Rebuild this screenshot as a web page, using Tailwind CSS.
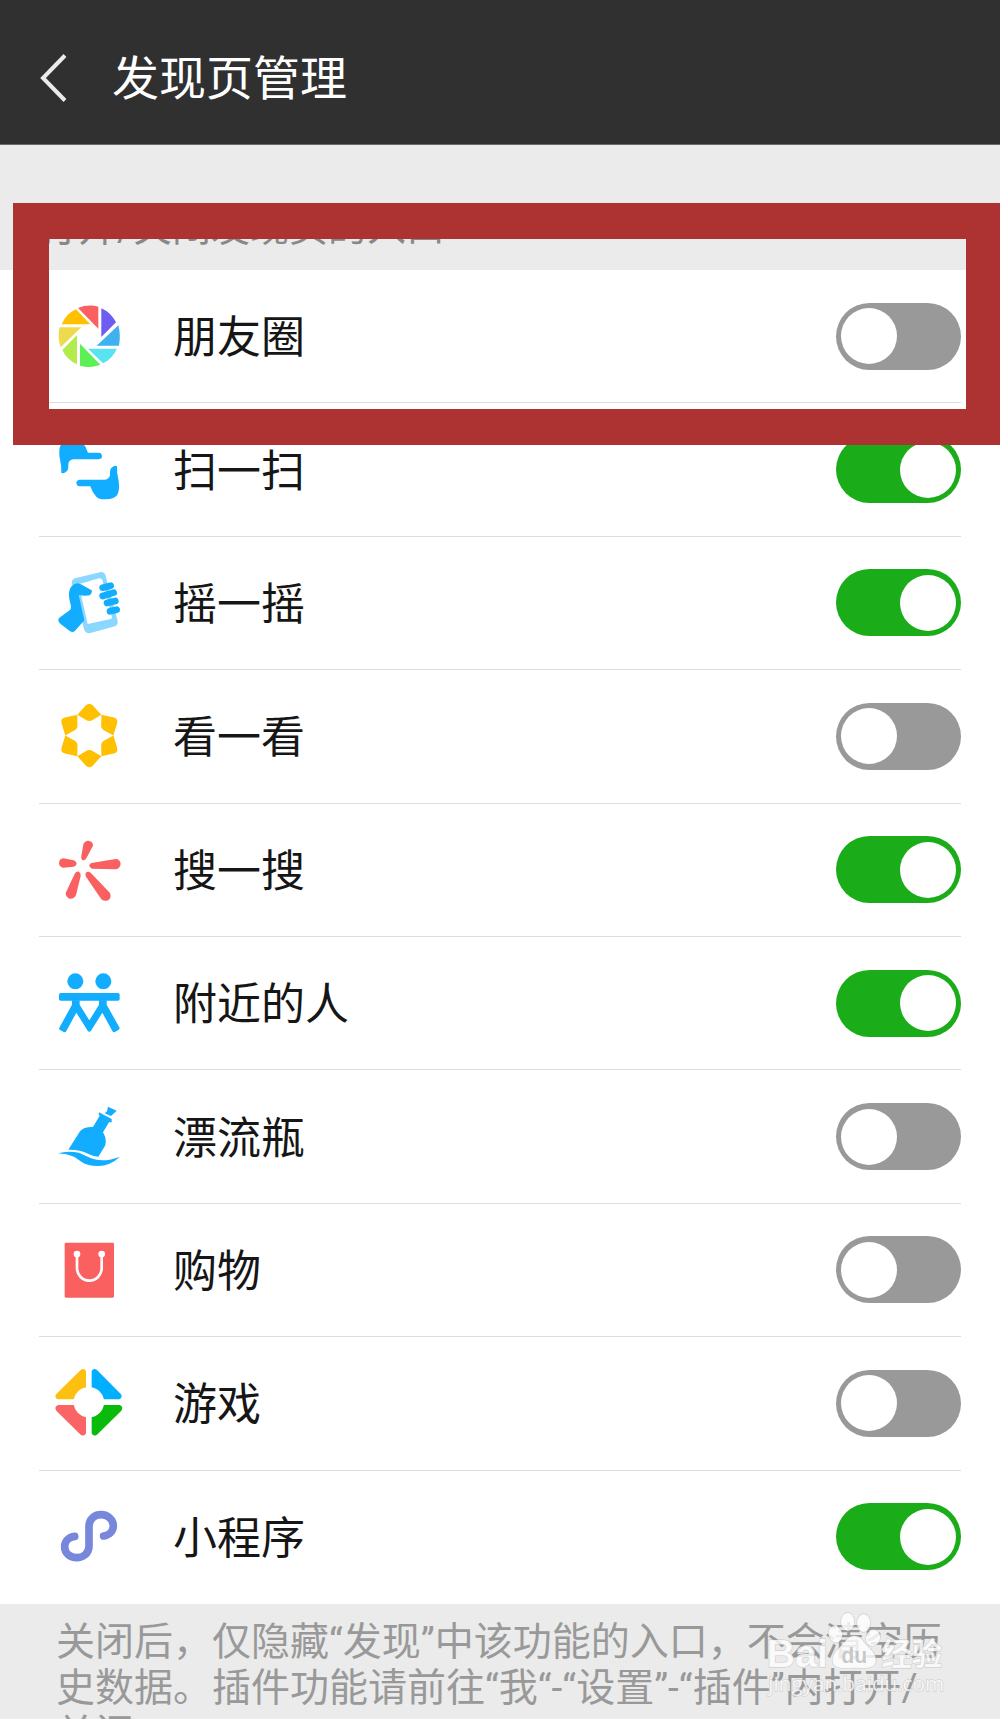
<!DOCTYPE html>
<html lang="zh-CN">
<head>
<meta charset="utf-8">
<meta name="viewport" content="width=device-width, initial-scale=1">
<title>发现页管理</title>
<script src="https://cdn.jsdelivr.net/npm/@tailwindcss/browser@4"></script>
</head>
<body class="bg-[#ebebeb]">
<div class="relative flex h-screen flex-col overflow-hidden bg-[#ebebeb] font-['Roboto','Noto_Sans_CJK_SC',sans-serif] text-[#161616]">
  <header class="flex h-[145px] shrink-0 items-center border-b border-[#6b6b6b] bg-[#303030] px-10 pt-3 text-white">
    <button type="button" aria-label="返回" class="mr-11 block">
      <svg class="h-12 w-7" viewBox="0 0 28 48" fill="none" stroke="#ebebeb" stroke-width="4"><path d="M25 1.500 3 24 25 46.500"/></svg>
    </button>
    <h1 class="text-[47px] leading-none">发现页管理</h1>
  </header>

  <main>
    <h2 class="px-[39px] pt-[60px] pb-[19px] text-[39px] leading-[46px] text-[#888]">打开/关闭发现页的入口</h2>

    <ul class="grid h-[1334px] auto-rows-fr bg-white px-[39px] text-[44px]">
      <li class="flex items-center border-b border-[#dedede]">
        <svg class="ml-[18px] size-16 overflow-visible" viewBox="171 101 192 192">
          <path fill="#fa6060" d="M234 113Q264 101 295 109V175Z"/>
          <path fill="#6e5df0" d="M304 114Q332 126 348 156L304 200Z"/>
          <path fill="#3eb1ee" d="M355 165Q363 195 357 226H290Z"/>
          <path fill="#57e3f0" d="M264 235H350Q339 264 309 279Z"/>
          <path fill="#5bf054" d="M240 220 301 283Q270 295 240 286Z"/>
          <path fill="#b2ec4c" d="M231 194V282Q200 268 187 239Z"/>
          <path fill="#eddb4d" d="M179 171H244L182 231Q171 200 179 171Z"/>
          <path fill="#fec000" d="M185 162Q198 130 228 117L271 162Z"/>
        </svg>
        <label for="moments" class="ml-[52px] flex-1 pt-1">朋友圈</label>
        <input id="moments" type="checkbox" class="flex h-[67px] w-[125px] appearance-none items-center rounded-full bg-[#999] px-[5px] before:size-14 before:rounded-full before:bg-white checked:justify-end checked:bg-[#1bad19]">
      </li>
      <li class="flex items-center border-b border-[#dedede]">
        <svg class="ml-[18px] size-16 overflow-visible" viewBox="171 501 192 192" fill="#12adff">
          <path id="hand" d="M184 605Q190 610 201 600Q206 595 205 578Q208 566 220 565H297Q306 563 306 555Q305 546 297 545H264Q258 526 246 514Q238 506 222 506Q194 505 184 518Q175 533 179 560Q185 585 184 605Z"/>
          <use href="#hand" transform="rotate(180 267.500 595.500)"/>
        </svg>
        <label for="scan" class="ml-[52px] flex-1 pt-1">扫一扫</label>
        <input id="scan" type="checkbox" checked class="flex h-[67px] w-[125px] appearance-none items-center rounded-full bg-[#999] px-[5px] before:size-14 before:rounded-full before:bg-white checked:justify-end checked:bg-[#1bad19]">
      </li>
      <li class="flex items-center border-b border-[#dedede]">
        <svg class="ml-[18px] size-16 overflow-visible" viewBox="81 92 192 192" fill="#12adff">
          <path fill="#8ad7ff" fill-rule="evenodd" d="M135 114 213 95Q223 94 226 103L263 242Q264 253 255 258L179 279Q168 279 163 269L125 128Q125 118 135 114ZM146 132 173 251 242 236Q248 235 245 228L217 119Q214 113 207 114Z"/>
          <path d="M85 240Q84 235 90 231L119 210Q125 204 122 193Q113 162 120 145Q127 131 143 129Q154 131 166 139L185 150Q188 157 179 165Q166 168 146 164L163 240 134 273Q127 278 119 272L91 250Q85 245 85 240Z"/>
          <g fill="none" stroke="#12adff" stroke-width="20" stroke-linecap="round"><path d="M218 142 242 136M218 167 251 157M231 188 256 182M240 213 260 208"/></g>
        </svg>
        <label for="shake" class="ml-[52px] flex-1 pt-1">摇一摇</label>
        <input id="shake" type="checkbox" checked class="flex h-[67px] w-[125px] appearance-none items-center rounded-full bg-[#999] px-[5px] before:size-14 before:rounded-full before:bg-white checked:justify-end checked:bg-[#1bad19]">
      </li>
      <li class="flex items-center border-b border-[#dedede]">
        <svg class="ml-[18px] size-16 overflow-visible" viewBox="81 492 192 192" fill="#fec000">
          <path id="petal" d="M142 524 168 496Q178 486 188 496L214 524 189 539Q178 547 167 539Z"/>
          <use href="#petal" transform="rotate(60 178 586.500)"/>
          <use href="#petal" transform="rotate(120 178 586.500)"/>
          <use href="#petal" transform="rotate(180 178 586.500)"/>
          <use href="#petal" transform="rotate(240 178 586.500)"/>
          <use href="#petal" transform="rotate(300 178 586.500)"/>
        </svg>
        <label for="look" class="ml-[52px] flex-1 pt-1">看一看</label>
        <input id="look" type="checkbox" class="flex h-[67px] w-[125px] appearance-none items-center rounded-full bg-[#999] px-[5px] before:size-14 before:rounded-full before:bg-white checked:justify-end checked:bg-[#1bad19]">
      </li>
      <li class="flex items-center border-b border-[#dedede]">
        <svg class="ml-[18px] size-16 overflow-visible" viewBox="81 82 192 192" fill="#fa6060">
          <path d="M160 101Q165 89 176 90Q190 93 189 105L169 143Q163 152 156 147Q152 144 154 136Z"/>
          <path d="M100 143 131 149Q139 152 140 159Q138 166 131 168L100 171Q88 170 87 157Q88 144 100 143Z"/>
          <path d="M184 157 257 145Q270 145 272 160Q270 174 257 176L186 174Q178 171 178 164Q179 159 184 157Z"/>
          <path d="M135 188Q140 181 147 183Q153 187 152 196L138 253Q133 265 119 264Q107 260 107 247Z"/>
          <path d="M167 187Q173 180 182 186L240 247Q245 259 236 268Q224 274 214 266L168 198Q165 192 167 187Z"/>
        </svg>
        <label for="search" class="ml-[52px] flex-1 pt-1">搜一搜</label>
        <input id="search" type="checkbox" checked class="flex h-[67px] w-[125px] appearance-none items-center rounded-full bg-[#999] px-[5px] before:size-14 before:rounded-full before:bg-white checked:justify-end checked:bg-[#1bad19]">
      </li>
      <li class="flex items-center border-b border-[#dedede]">
        <svg class="ml-[18px] size-16 overflow-visible" viewBox="81 482 192 192" fill="#12adff">
          <circle cx="136" cy="513" r="24"/><circle cx="220" cy="513" r="24"/>
          <rect x="87" y="548" width="182" height="23" rx="5"/>
          <path d="M126 570H149V583L178 630 207 583V570H230V583L268 651Q270 656 266 658L255 665Q250 667 247 662L217 607 184 660Q178 669 172 660L139 607 109 662Q106 667 101 665L90 659Q86 656 88 652L126 583Z"/>
        </svg>
        <label for="nearby" class="ml-[52px] flex-1 pt-1">附近的人</label>
        <input id="nearby" type="checkbox" checked class="flex h-[67px] w-[125px] appearance-none items-center rounded-full bg-[#999] px-[5px] before:size-14 before:rounded-full before:bg-white checked:justify-end checked:bg-[#1bad19]">
      </li>
      <li class="flex items-center border-b border-[#dedede]">
        <svg class="ml-[18px] size-16 overflow-visible" viewBox="81 72 192 192" fill="#12adff">
          <path d="M234 77 260 89 243 105 224 97 231 91Z"/>
          <path d="M207 94 245 114V124H237L219 154Q231 175 226 193L205 227Q191 227 174 218Q149 205 115 206L150 151Q161 137 189 138L209 104Q204 99 207 94Z"/>
          <path d="M84 217Q112 208 147 215L183 232Q221 246 270 227Q241 254 204 255Q173 255 154 242L132 227Q110 218 84 217Z"/>
        </svg>
        <label for="bottle" class="ml-[52px] flex-1 pt-1">漂流瓶</label>
        <input id="bottle" type="checkbox" class="flex h-[67px] w-[125px] appearance-none items-center rounded-full bg-[#999] px-[5px] before:size-14 before:rounded-full before:bg-white checked:justify-end checked:bg-[#1bad19]">
      </li>
      <li class="flex items-center border-b border-[#dedede]">
        <svg class="ml-[18px] size-16 overflow-visible" viewBox="81 472 192 192">
          <rect x="104" y="486" width="148" height="165" rx="4" fill="#fa6060"/>
          <circle cx="141" cy="520" r="10" fill="#fff"/><circle cx="215" cy="520" r="10" fill="#fff"/>
          <path d="M141 520V562A37 38 0 0 0 215 562V520" fill="none" stroke="#fff" stroke-width="8"/>
        </svg>
        <label for="shopping" class="ml-[52px] flex-1 pt-1">购物</label>
        <input id="shopping" type="checkbox" class="flex h-[67px] w-[125px] appearance-none items-center rounded-full bg-[#999] px-[5px] before:size-14 before:rounded-full before:bg-white checked:justify-end checked:bg-[#1bad19]">
      </li>
      <li class="flex items-center border-b border-[#dedede]">
        <svg class="ml-[18px] size-16 overflow-visible" viewBox="81 93 192 192">
          <path fill="#fdc010" d="M168 94V142Q139 148 131 178H85Q71 174 79 162L152 90Q163 83 168 94Z"/>
          <path fill="#00b0ff" d="M185 94V142Q214 148 222 178H267Q279 174 273 163L201 90Q190 83 185 94Z"/>
          <path fill="#fa6464" d="M168 280V232Q139 225 131 195H85Q71 200 79 212L152 284Q163 291 168 280Z"/>
          <path fill="#0bbb0c" d="M185 280V232Q214 225 222 195H269Q282 200 274 212L201 284Q190 291 185 280Z"/>
        </svg>
        <label for="games" class="ml-[52px] flex-1 pt-1">游戏</label>
        <input id="games" type="checkbox" class="flex h-[67px] w-[125px] appearance-none items-center rounded-full bg-[#999] px-[5px] before:size-14 before:rounded-full before:bg-white checked:justify-end checked:bg-[#1bad19]">
      </li>
      <li class="flex items-center border-b border-white">
        <svg class="ml-[18px] size-16 overflow-visible" viewBox="81 493 192 192" fill="none" stroke="#7788dc" stroke-width="23" stroke-linecap="round">
          <path d="M134 587C115 589 104 603 104 618C104 637 120 651 140 651C161 651 177 637 177 617V557C177 537 192 522 213 522C234 522 250 537 250 556C250 570 239 583 221 586"/>
        </svg>
        <label for="mini" class="ml-[52px] flex-1 pt-1">小程序</label>
        <input id="mini" type="checkbox" checked class="flex h-[67px] w-[125px] appearance-none items-center rounded-full bg-[#999] px-[5px] before:size-14 before:rounded-full before:bg-white checked:justify-end checked:bg-[#1bad19]">
      </li>
    </ul>

    <p class="px-14 pt-[15px] text-[39px] leading-[46px] whitespace-nowrap text-[#999]">关闭后，仅隐藏“发现”中该功能的入口，不会清空历<br>史数据。插件功能请前往“我“-“设置”-“插件”内打开/<br>关闭。</p>
  </main>

  <!-- highlight around the first entry -->
  <div class="pointer-events-none absolute top-[203px] right-0 left-[13px] h-[242px] border-36 border-r-34 border-[#ad3333]"></div>

  <!-- watermark -->
  <svg class="pointer-events-none absolute top-[1610px] right-[52px] h-[90px] w-[183px]" viewBox="795 90 549 270" fill="#fff" fill-opacity=".8" stroke="#aaa" stroke-opacity=".4" stroke-width="4" paint-order="stroke">
    <ellipse cx="1043" cy="125" rx="20" ry="27"/>
    <ellipse cx="1091" cy="129" rx="20" ry="27"/>
    <ellipse cx="1006" cy="163" rx="20" ry="25" transform="rotate(-15 1006 163)"/>
    <ellipse cx="1119" cy="174" rx="21" ry="25" transform="rotate(20 1119 174)"/>
    <path d="M1063 167Q1080 167 1092 187L1119 216Q1133 236 1124 254Q1113 268 1063 263Q1014 269 1001 254Q992 238 1006 216L1034 187Q1046 167 1063 167Z"/>
    <text x="800" y="262" font-family="Liberation Sans" font-weight="700" font-size="118">Bai</text>
    <text x="1024" y="250" font-family="Liberation Sans" font-weight="700" font-size="64" fill="#bbb" stroke="none">du</text>
    <text x="1144" y="255" font-family="Noto Sans CJK SC" font-weight="700" font-size="91">经验</text>
    <text x="805" y="334" font-family="Open Sans" font-size="62">jingyan.baidu.com</text>
  </svg>
</div>
</body>
</html>
